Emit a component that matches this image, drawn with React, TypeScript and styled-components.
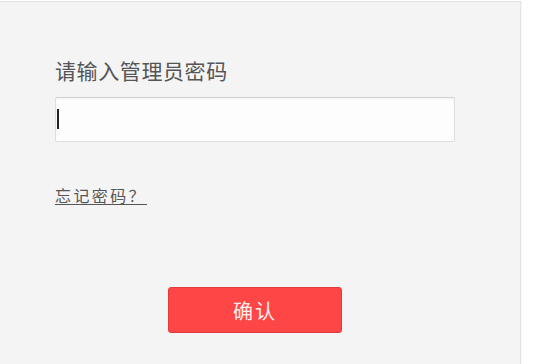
import React from "react";
import styled, { createGlobalStyle } from "styled-components";

const GlobalStyle = createGlobalStyle`
  html, body {
    margin: 0;
    padding: 0;
    background: #ffffff;
  }
  body {
    font-family: "Noto Sans CJK SC", "Noto Sans", "Liberation Sans", sans-serif;
  }
`;

const Panel = styled.div`
  margin-top: 1px;
  width: 521px;
  height: 363px;
  box-sizing: border-box;
  background: #f4f4f4;
  border-top: 1px solid #e3e3e3;
  border-right: 1px solid #e3e3e3;
  box-shadow: 1px 0 1px rgba(0, 0, 0, 0.03);
  padding: 56px 0 0 55px;
`;

const Form = styled.div`
  width: 400px;
  display: flex;
  flex-direction: column;
`;

const Label = styled.div`
  font-size: 21px;
  line-height: 25px;
  letter-spacing: 0.6px;
  color: #555555;
`;

const InputWrap = styled.div`
  position: relative;
  margin-top: 14px;
  height: 45px;
`;

const PasswordInput = styled.input`
  width: 100%;
  height: 100%;
  box-sizing: border-box;
  border: 1px solid #dedede;
  border-top-color: #d2d2d2;
  border-radius: 2px;
  background: #fdfdfd;
  box-shadow: inset 0 1px 2px rgba(0, 0, 0, 0.05);
  outline: none;
  padding: 0 8px;
  font-size: 16px;
  caret-color: transparent;
`;

const Caret = styled.span`
  position: absolute;
  left: 2px;
  top: 12px;
  width: 2px;
  height: 20px;
  background: #222222;
`;

const ForgotLink = styled.a`
  align-self: flex-start;
  margin-top: 43px;
  font-size: 16px;
  line-height: 20px;
  letter-spacing: 2.4px;
  color: #555555;
  text-decoration: underline;
  text-underline-offset: 2px;
  cursor: pointer;
`;

const ConfirmButton = styled.button`
  align-self: center;
  margin-top: 82px;
  width: 174px;
  height: 46px;
  box-sizing: border-box;
  background: #ff4646;
  border: 1px solid #e43a3a;
  border-radius: 3px;
  color: #fff0f0;
  font-family: inherit;
  font-size: 20px;
  letter-spacing: 2px;
  cursor: pointer;
`;

const App = () => {
  return (
    <>
      <GlobalStyle />
      <Panel>
        <Form>
          <Label>请输入管理员密码</Label>
          <InputWrap>
            <PasswordInput type="password" />
            <Caret />
          </InputWrap>
          <ForgotLink>忘记密码？</ForgotLink>
          <ConfirmButton>确认</ConfirmButton>
        </Form>
      </Panel>
    </>
  );
};

export default App;
